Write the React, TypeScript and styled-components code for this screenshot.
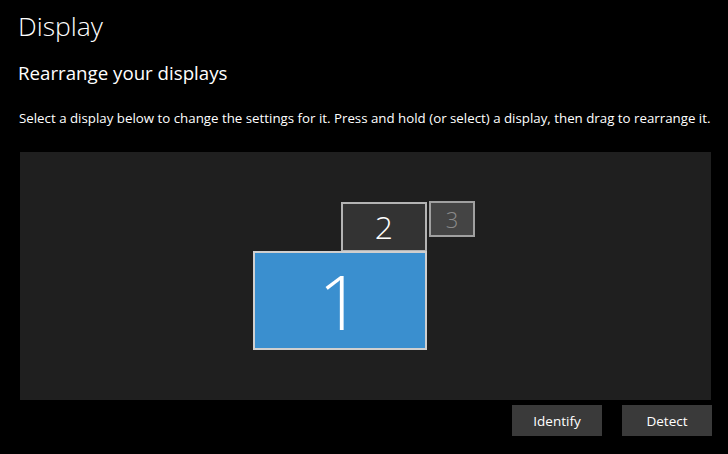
import React from "react";
import styled, { createGlobalStyle } from "styled-components";

const Global = createGlobalStyle`
  html, body { margin: 0; padding: 0; background: #000; }
  body { font-family: "Open Sans", "Noto Sans", "Liberation Sans", sans-serif; color: #fff; }
`;

const Page = styled.div`
  width: 728px;
  height: 454px;
  background: #000;
  padding: 4px 0 0 18px;
  box-sizing: border-box;
  overflow: hidden;
  display: flex;
  flex-direction: column;
  align-items: flex-start;
`;

const Title = styled.h1`
  margin: 0;
  font-size: 26.5px;
  line-height: 44px;
  font-weight: 300;
  color: #fff;
`;

const Subtitle = styled.h2`
  margin: 11px 0 0;
  font-size: 18.7px;
  line-height: 28px;
  font-weight: 400;
  color: #fff;
`;

const Description = styled.p`
  margin: 22px 0 0 1px;
  font-size: 13.3px;
  line-height: 18px;
  color: #fff;
  white-space: nowrap;
`;

const Canvas = styled.div`
  position: relative;
  margin: 25px 0 0 2px;
  width: 691px;
  height: 248px;
  background: #1f1f1f;
`;

type Variant = "primary" | "secondary" | "tertiary";
type MonitorProps = { $x: number; $y: number; $w: number; $h: number; $variant: Variant };

const fills = { primary: "#3a8fcf", secondary: "#333333", tertiary: "#444444" };
const borders = { primary: "#cfcfcf", secondary: "#b4b4b4", tertiary: "#a0a0a0" };
const digitColors = { primary: "#ffffff", secondary: "#ffffff", tertiary: "#8a8a8a" };
const digitSizes = { primary: 76, secondary: 32, tertiary: 22 };

const Monitor = styled.div<MonitorProps>`
  position: absolute;
  left: ${(p) => p.$x}px;
  top: ${(p) => p.$y}px;
  width: ${(p) => p.$w}px;
  height: ${(p) => p.$h}px;
  box-sizing: border-box;
  border: 2px solid ${(p) => borders[p.$variant]};
  background: ${(p) => fills[p.$variant]};
  color: ${(p) => digitColors[p.$variant]};
  font-size: ${(p) => digitSizes[p.$variant]}px;
  font-weight: 300;
  display: flex;
  align-items: center;
  justify-content: center;
  line-height: 1;
`;

const ButtonRow = styled.div`
  display: flex;
  justify-content: flex-end;
  gap: 20px;
  width: 694px;
  margin-top: 5px;
`;

const Button = styled.button`
  width: 90px;
  height: 31px;
  border: none;
  background: #3a3a3a;
  color: #fff;
  font-family: inherit;
  font-size: 13.5px;
  padding: 0;
`;

const monitors: { id: string; variant: Variant; x: number; y: number; w: number; h: number }[] = [
  { id: "2", variant: "secondary", x: 321, y: 50, w: 86, h: 50 },
  { id: "3", variant: "tertiary", x: 409, y: 49, w: 46, h: 36 },
  { id: "1", variant: "primary", x: 233, y: 99, w: 174, h: 99 },
];

export default function App() {
  return (
    <>
      <Global />
      <Page>
        <Title>Display</Title>
        <Subtitle>Rearrange your displays</Subtitle>
        <Description>
          Select a display below to change the settings for it. Press and hold (or select) a display, then drag to rearrange it.
        </Description>
        <Canvas>
          {monitors.map((m) => (
            <Monitor key={m.id} $variant={m.variant} $x={m.x} $y={m.y} $w={m.w} $h={m.h}>
              {m.id}
            </Monitor>
          ))}
        </Canvas>
        <ButtonRow>
          <Button>Identify</Button>
          <Button>Detect</Button>
        </ButtonRow>
      </Page>
    </>
  );
}
